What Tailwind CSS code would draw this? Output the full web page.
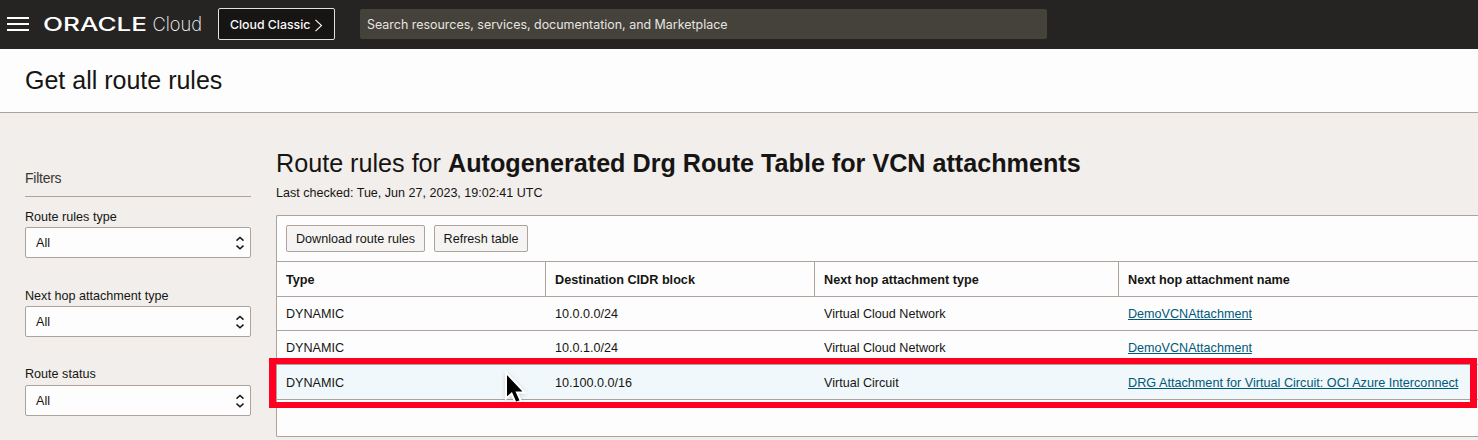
<!DOCTYPE html>
<html lang="en">
<head>
<meta charset="utf-8">
<title>Get all route rules</title>
<script src="https://cdn.jsdelivr.net/npm/@tailwindcss/browser@4"></script>
</head>
<body class="relative flex h-[440px] w-[1478px] flex-col overflow-hidden bg-[#f1eeeb] font-['Liberation_Sans',Arial,sans-serif] text-[12.6px] leading-4 text-[#161513]">
  <header class="flex h-[49px] shrink-0 items-center bg-[#252422] pb-px">
    <div class="ml-[7px] flex w-[22px] flex-col gap-1">
      <div class="h-[2px] bg-white"></div>
      <div class="h-[2px] bg-white"></div>
      <div class="h-[2px] bg-white"></div>
    </div>
    <svg class="ml-[14px] h-[48px] w-[162px] shrink-0" viewBox="0 0 162 48" fill="#fff">
      <text x="0" y="31" font-family="Inter" font-size="18.2" font-weight="500" textLength="104" lengthAdjust="spacingAndGlyphs">ORACLE</text>
      <text x="109.5" y="31.2" font-family="Inter" font-size="19.4" font-weight="250" textLength="49.5" lengthAdjust="spacingAndGlyphs">Cloud</text>
    </svg>
    <button class="ml-[13px] flex h-8 w-[117px] shrink-0 items-center rounded-[2px] border border-[#e4e1dd] bg-[#161513] pl-[11px] font-['Inter',sans-serif] text-[12.3px] font-medium text-[#fbf9f8]">
      <span class="w-[83px] pt-[2px] text-left whitespace-nowrap">Cloud Classic</span>
      <svg class="mt-[3px] ml-px h-[13px] w-[9px]" viewBox="0 0 9 13" fill="none" stroke="#fbf9f8" stroke-width="1.1"><path d="M1.5 .8 7.5 6.5 1.5 12.2"/></svg>
    </button>
    <div class="ml-[25px] flex h-[30px] w-[687px] items-center rounded-[2px] bg-[#45423b] pt-[2px] pl-[7px] font-['Inter',sans-serif] text-[12.45px] text-[#e8e5e0]">Search resources, services, documentation, and Marketplace</div>
  </header>
  <div class="flex h-16 shrink-0 items-center border-b border-[#aea29a] bg-[#fdfdfd] pb-[2px] pl-[25px]">
    <h1 class="text-[25px] leading-8">Get all route rules</h1>
  </div>
  <main class="flex grow">
    <aside class="ml-[25px] w-[226px] shrink-0 pt-[56px]">
      <h2 class="h-7 border-b border-[#aea29a] text-[14px] leading-[18px] tracking-[-0.25px] text-[#3a3632]">Filters</h2>
      <div class="mt-3 h-[79px]">
        <div class="h-[18px]">Route rules type</div>
        <div class="flex h-[31px] items-center justify-between rounded-[2px] border border-[#aea29a] bg-[#fdfdfd] pr-[5px] pl-[10px]"><span>All</span><svg class="h-[14px] w-[10px]" viewBox="0 0 10 14" fill="none" stroke="#161513" stroke-width="1.5"><path d="M1.5 4.6 5 1.5 8.5 4.6M1.5 9.6 5 12.7 8.5 9.6"/></svg></div>
      </div>
      <div class="h-[78px]">
        <div class="h-[18px]">Next hop attachment type</div>
        <div class="flex h-[31px] items-center justify-between rounded-[2px] border border-[#aea29a] bg-[#fdfdfd] pr-[5px] pl-[10px]"><span>All</span><svg class="h-[14px] w-[10px]" viewBox="0 0 10 14" fill="none" stroke="#161513" stroke-width="1.5"><path d="M1.5 4.6 5 1.5 8.5 4.6M1.5 9.6 5 12.7 8.5 9.6"/></svg></div>
      </div>
      <div>
        <div class="h-[19px]">Route status</div>
        <div class="flex h-[31px] items-center justify-between rounded-[2px] border border-[#aea29a] bg-[#fdfdfd] pr-[5px] pl-[10px]"><span>All</span><svg class="h-[14px] w-[10px]" viewBox="0 0 10 14" fill="none" stroke="#161513" stroke-width="1.5"><path d="M1.5 4.6 5 1.5 8.5 4.6M1.5 9.6 5 12.7 8.5 9.6"/></svg></div>
      </div>
    </aside>
    <section class="ml-[25px] grow pt-[34px]">
      <h2 class="h-[37px] text-[25.17px] leading-8 whitespace-nowrap">Route rules for <b>Autogenerated Drg Route Table for VCN attachments</b></h2>
      <p class="h-[31px] text-[12.55px] leading-[18px]">Last checked: Tue, Jun 27, 2023, 19:02:41 UTC</p>
      <div class="h-[222px] rounded-l-[2px] border border-r-0 border-[#aea29a] bg-[#fdfdfd]">
        <div class="flex h-[45px] items-center gap-[9px] pl-[9px]">
          <button class="h-[27px] w-[139px] rounded-[2px] border border-[#aea29a] bg-[#f5f4f2] whitespace-nowrap">Download route rules</button>
          <button class="h-[27px] w-[94px] rounded-[2px] border border-[#aea29a] bg-[#f5f4f2] whitespace-nowrap">Refresh table</button>
        </div>
        <div class="grid h-9 grid-cols-[269px_269px_304px_1fr] border-y border-[#aea29a] text-[12.66px] leading-[36px] font-bold *:h-[34px] *:pl-[9px]">
          <div class="border-r border-[#aea29a]">Type</div><div class="border-r border-[#aea29a]">Destination CIDR block</div><div class="border-r border-[#aea29a]">Next hop attachment type</div><div>Next hop attachment name</div>
        </div>
        <div class="grid h-[34px] grid-cols-[269px_269px_304px_1fr] border-b border-[#aea29a] leading-[35px] *:pl-[9px]">
          <div>DYNAMIC</div><div>10.0.0.0/24</div><div>Virtual Cloud Network</div><div><a class="text-[#00597a] underline">DemoVCNAttachment</a></div>
        </div>
        <div class="grid h-[34px] grid-cols-[269px_269px_304px_1fr] border-b border-[#aea29a] leading-[35px] *:pl-[9px]">
          <div>DYNAMIC</div><div>10.0.1.0/24</div><div>Virtual Cloud Network</div><div><a class="text-[#00597a] underline">DemoVCNAttachment</a></div>
        </div>
        <div class="grid h-[35px] grid-cols-[269px_269px_304px_1fr] border-b border-[#aea29a] bg-[#f0f8fb] leading-[36px] *:pl-[9px]">
          <div>DYNAMIC</div><div>10.100.0.0/16</div><div>Virtual Circuit</div><div class="whitespace-nowrap"><a class="text-[12.66px] text-[#00597a] underline">DRG Attachment for Virtual Circuit: OCI Azure Interconnect</a></div>
        </div>
      </div>
    </section>
  </main>
  <svg class="absolute top-[366px] left-[500px] h-[42px] w-[32px] drop-shadow-sm" viewBox="0 0 32 42"><path d="M6 6.6V32.5L11.6 27.6 15.6 37 20.8 34.8 17 26.6H24.8Z" fill="#000" stroke="#fff" stroke-width="2"/></svg>
  <div class="absolute top-[358px] left-[269px] h-[50px] w-[1208px] border-x-7 border-y-6 border-[#ff0022]"></div>
</body>
</html>
